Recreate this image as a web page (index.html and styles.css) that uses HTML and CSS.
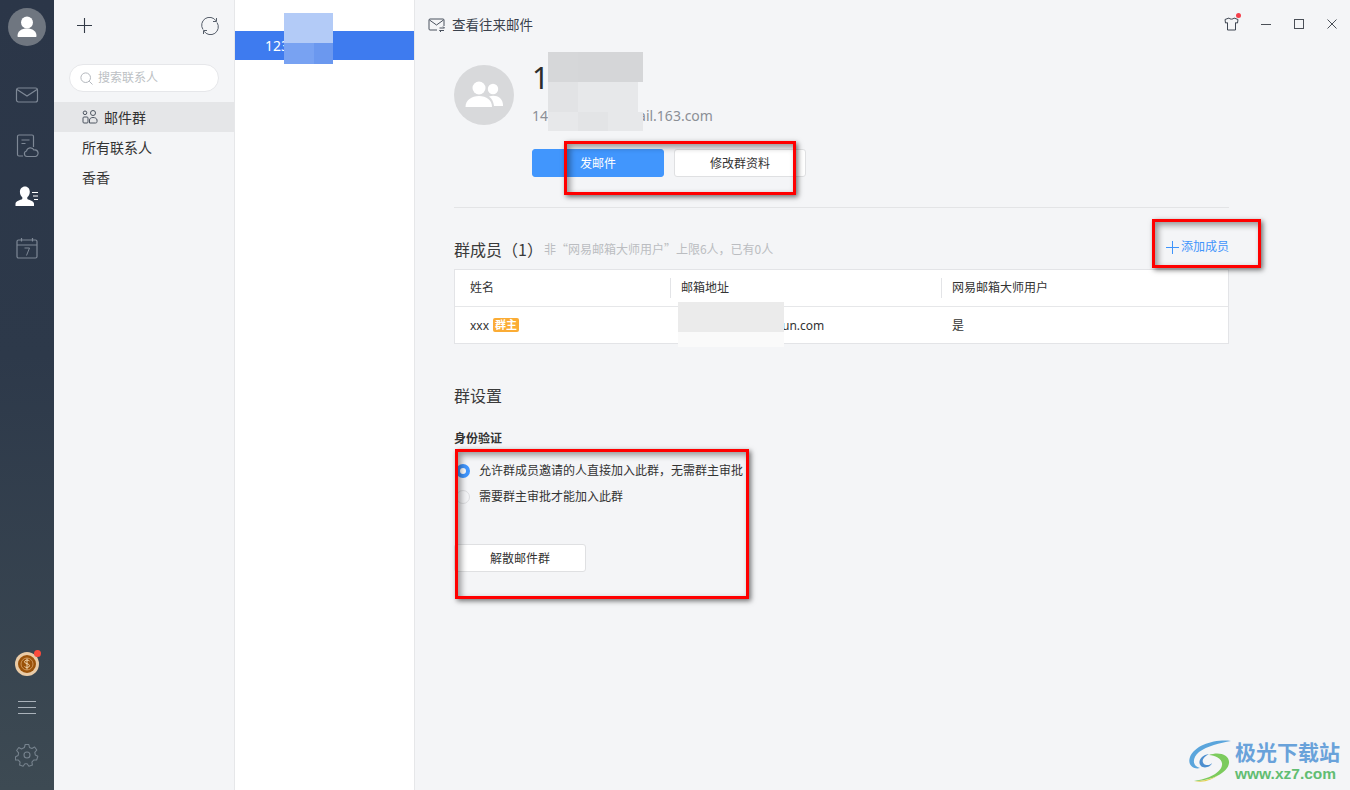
FILE: index.html
```html
<!DOCTYPE html>
<html lang="zh-CN">
<head>
<meta charset="utf-8">
<title>网易邮箱大师</title>
<link rel="stylesheet" href="styles.css">
</head>
<body>
<div class="app">
  <nav class="rail">
    <div class="avatar">
      <svg width="38" height="38" viewBox="0 0 38 38"><circle cx="19" cy="14.500" r="6" fill="#fff"/><path d="M9.500 28c0-5 4-7.500 9.500-7.500s9.500 2.500 9.500 7.500c0 .6-.4 1-1 1h-17c-.6 0-1-.4-1-1z" fill="#fff"/></svg>
    </div>
    <div class="rail-icons">
      <svg class="rail-icon" width="24" height="24" viewBox="0 0 24 24" fill="none" stroke="#7e8896" stroke-width="1.200"><rect x="1.500" y="5" width="21" height="14" rx="2"/><path d="M2 6.500l10 6.500 10-6.500"/></svg>
      <svg class="rail-icon" width="24" height="24" viewBox="0 0 24 24" fill="none" stroke="#7e8896" stroke-width="1.200"><path d="M8 22H4a1.500 1.500 0 0 1-1.500-1.500v-18A1.500 1.500 0 0 1 4 1h13a1.500 1.500 0 0 1 1.500 1.500V13"/><path d="M6.500 6h8M6.500 9.500h4"/><path d="M12 22.500a2.800 2.800 0 0 1-.5-5.500 4 4 0 0 1 7.500-1 3.300 3.300 0 0 1 1.500 6.500z"/></svg>
      <svg class="rail-icon" width="24" height="24" viewBox="0 0 24 24"><path d="M10 1.500c3 0 4.800 2.300 4.800 5.300 0 2.300-1.100 4.300-2.500 5.400v1.800c1.800 1.200 6.700 1.700 6.700 4.800v2.200H.500v-2.200c0-3.100 5-3.600 6.800-4.800v-1.800C5.900 11.100 4.900 9.100 4.900 6.800c0-3 2.100-5.300 5.100-5.300z" fill="#fff"/><path d="M17 7.500h6M18 11h5M19 14.500h4" stroke="#fff" stroke-width="1.200"/></svg>
      <svg class="rail-icon rail-icon-last" width="24" height="24" viewBox="0 0 24 24" fill="none" stroke="#7e8896" stroke-width="1.200"><rect x="2" y="3" width="20" height="18" rx="1.500"/><path d="M2 8h20M6.500 1v3.500M17.500 1v3.500"/><path d="M9.500 11h5l-3 7.500" stroke-width="1"/></svg>
    </div>
    <div class="rail-foot">
      <div class="coin">
        <svg width="24" height="24" viewBox="0 0 24 24"><circle cx="12" cy="12" r="12" fill="#eacba6"/><circle cx="12" cy="12" r="9" fill="#9b5209"/><circle cx="12" cy="12" r="6" fill="none" stroke="#d9a56b" stroke-width=".8"/><path d="M14.500 9c-1-1.300-5-1.300-5 .8 0 2.400 5 1.400 5 3.900 0 2.200-4 2.200-5 .8M12 6.500v11" fill="none" stroke="#f1d5ae" stroke-width="1"/></svg>
        <span class="coin-dot"></span>
      </div>
      <svg class="menu" width="18" height="14" viewBox="0 0 18 14" stroke="#aab2ba" stroke-width="1"><path d="M0 .5h18M0 6.500h18M0 12.500h18"/></svg>
      <svg class="gear" width="24" height="24" viewBox="0 0 24 24" fill="none" stroke="#77838e" stroke-width="1.100"><circle cx="12" cy="12" r="3"/><path d="M10.200 1.500h3.600l.7 3 2.400 1 2.700-1.500 2.200 3-2 2.300.5 2.700 2.500 1.300-1.100 3.600-3 .1-1.800 2.100.5 3-3.500 1.100-1.800-2.500h-2.200l-1.800 2.500-3.500-1.100.5-3-1.800-2.100-3-.1L.6 13.800l2.500-1.300.5-2.700-2-2.300 2.200-3L6.500 6l2.900-1.500z" stroke-linejoin="round"/></svg>
    </div>
  </nav>

  <aside class="contacts">
    <div class="contacts-top">
      <svg width="15" height="15" viewBox="0 0 15 15" stroke="#333b47" stroke-width="1.100"><path d="M7.500 0v15M0 7.500h15"/></svg>
      <svg width="18" height="18" viewBox="0 0 18 18" fill="none" stroke="#555d69" stroke-width="1"><path d="M2 12.500A7.500 7.500 0 0 1 15 3.800"/><path d="M16 5.500A7.500 7.500 0 0 1 3 14.200"/><path d="M15.500 1v3.500H12M2.500 17v-3.500H6"/></svg>
    </div>
    <div class="search">
      <svg width="13" height="13" viewBox="0 0 13 13" fill="none" stroke="#b4b8be" stroke-width="1"><circle cx="5.700" cy="5.700" r="4.800"/><path d="M9.200 9.200l3.300 3.300"/></svg>
      <span>搜索联系人</span>
    </div>
    <ul class="groups">
      <li class="group group-active">
        <svg class="group-icon" width="16" height="14" viewBox="0 0 16 14" fill="none" stroke="#4d5561" stroke-width="1"><circle cx="3" cy="2.800" r="1.800"/><circle cx="11" cy="3" r="2.500"/><rect x="1" y="7" width="5" height="6" rx="1"/><path d="M7.500 13v-3c0-1.500 1.500-2.500 3.500-2.500s4 1 4 2.500v1.500c0 1-.5 1.500-1.500 1.500z"/></svg>
        <span>邮件群</span>
      </li>
      <li class="group">所有联系人</li>
      <li class="group">香香</li>
    </ul>
  </aside>

  <section class="list">
    <div class="list-row">123</div>
  </section>

  <main class="detail">
    <header class="topbar">
      <div class="history">
        <svg width="17" height="15" viewBox="0 0 17 15" fill="none" stroke="#4a525e" stroke-width="1"><path d="M9 12H2a1 1 0 0 1-1-1V2a1 1 0 0 1 1-1h13a1 1 0 0 1 1 1v6"/><path d="M1.500 2l7 5 7-5"/><path d="M11.500 10h5l-1.500-1.500M16 12.500h-4.500l1.500 1.500"/></svg>
        <span>查看往来邮件</span>
      </div>
      <div class="winctl">
        <span class="skin">
          <svg width="15" height="14" viewBox="0 0 15 14" fill="none" stroke="#3e4652" stroke-width="1"><path d="M5 1L1 2.500l.5 3.500 2-.3V13h8V5.700l2 .3.500-3.500L10 1c-.5 1.500-4.500 1.500-5 0z"/></svg>
          <span class="skin-dot"></span>
        </span>
        <svg width="10" height="10" viewBox="0 0 10 10" stroke="#4a4f57" stroke-width="1"><path d="M0 5.500h10"/></svg>
        <svg width="10" height="10" viewBox="0 0 10 10" fill="none" stroke="#4a4f57" stroke-width="1"><rect x=".5" y=".5" width="9" height="9"/></svg>
        <svg width="10" height="10" viewBox="0 0 10 10" stroke="#4a4f57" stroke-width="1"><path d="M.5.500l9 9M9.500.500l-9 9"/></svg>
      </div>
    </header>

    <div class="content">
      <div class="profile">
        <div class="group-avatar">
          <svg width="40" height="30" viewBox="0 0 40 30" fill="#fff"><circle cx="15" cy="8" r="6.500"/><circle cx="29" cy="9" r="5.200"/><path d="M1.500 27c0-7 6-11 13.500-11s13 4 13 11z"/><path d="M25 16.500c6-2.500 14 .5 14 8.500v1h-9c-.5-4-2-7.500-5-9.500z"/></svg>
        </div>
        <div class="profile-info">
          <h1 class="name">1</h1>
          <p class="mail">14<span class="mail-gap"></span>ail.163.com</p>
        </div>
      </div>
      <div class="actions">
        <button class="btn btn-primary">发邮件</button>
        <button class="btn">修改群资料</button>
      </div>
      <hr class="rule">

      <div class="members-head">
        <div class="members-title">
          <h2 class="section">群成员（1）</h2>
          <span class="hint">非“网易邮箱大师用户”上限6人，已有0人</span>
        </div>
        <a class="add">
          <svg width="13" height="13" viewBox="0 0 13 13" stroke="#3f94fb" stroke-width="1"><path d="M6.500 0v13M0 6.500h13"/></svg>
          <span>添加成员</span>
        </a>
      </div>
      <div class="table">
        <div class="tr th">
          <div class="td">姓名</div>
          <div class="td td-split">邮箱地址</div>
          <div class="td td-split">网易邮箱大师用户</div>
        </div>
        <div class="tr">
          <div class="td">xxx<span class="owner">群主</span></div>
          <div class="td td-mail">un.com</div>
          <div class="td td-yes">是</div>
        </div>
      </div>

      <h2 class="section settings-title">群设置</h2>
      <h3 class="auth">身份验证</h3>
      <label class="radio"><span class="dot dot-on"></span>允许群成员邀请的人直接加入此群，无需群主审批</label>
      <label class="radio"><span class="dot"></span>需要群主审批才能加入此群</label>
      <button class="btn btn-danger">解散邮件群</button>
    </div>
  </main>
</div>

<!-- privacy masks over the personal data -->
<div class="mask mask-a"></div>
<div class="mask mask-b"></div>
<div class="mask mask-c"></div>
<div class="mask mask-d"></div>
<div class="mask mask-e"></div>
<div class="mask mask-f"></div>
<div class="mask mask-l"></div>
<div class="mask mask-g"></div>
<div class="mask mask-h"></div>
<div class="mask mask-i"></div>
<div class="mask mask-j"></div>
<div class="mask mask-k"></div>

<!-- call-out frames -->
<div class="frame frame-1"></div>
<div class="frame frame-2"></div>
<div class="frame frame-3"></div>

<div class="brand">
  <svg width="52" height="44" viewBox="0 0 52 44" fill="none">
    <path d="M44 2C28 0 8 6 3 18c-3 8 4 13 10 11C5 27 5 19 12 13 20 7 33 4 44 2z" fill="#5aa5dc"/>
    <path d="M14 27c-4-4 0-11 8-12-6 3-8 7-5 10 2 2 7 1 8-1-1 4-8 6-11 3z" fill="#4d8fd0"/>
    <path d="M22 16c10-4 21 0 20 8-1 10-18 18-35 18 14-2 27-8 28-16 1-6-7-10-13-10z" fill="#7ccb5d"/>
    <path d="M7 42c10 0 18-2 24-6-6 5-14 8-24 6z" fill="#e3d04c"/>
  </svg>
  <div class="brand-text">
    <div class="brand-name">极光下载站</div>
    <div class="brand-url">www.xz7.com</div>
  </div>
</div>
</body>
</html>
```

FILE: styles.css
```css
* { box-sizing: border-box; }

html, body {
  margin: 0;
  height: 790px;
  overflow: hidden;
}

body {
  font-family: "Noto Sans", "Noto Sans CJK SC", sans-serif;
  color: #333;
  background: #f4f5f7;
  position: relative;
}

.app {
  display: grid;
  grid-template-columns: 54px 181px 180px 1fr;
  height: 790px;
}

/* left navigation rail */
.rail {
  background: linear-gradient(#2b3648 0, #2d394a 45%, #3d4a53 100%);
  display: flex;
  flex-direction: column;
  align-items: center;
  padding-top: 8px;
}

.avatar {
  width: 38px;
  height: 38px;
  border-radius: 50%;
  background: #6f7680;
}

.rail-icons {
  display: flex;
  flex-direction: column;
  gap: 27px;
  margin-top: 37px;
}

.rail-icon { display: block; }

.rail-icon-last { margin-top: 1px; }

.rail-foot {
  margin-top: auto;
  display: flex;
  flex-direction: column;
  align-items: center;
  padding-bottom: 23px;
}

.coin {
  position: relative;
  width: 24px;
  height: 24px;
}

.coin svg { display: block; }

.coin-dot {
  position: absolute;
  top: -2px;
  right: -2px;
  width: 7px;
  height: 7px;
  border-radius: 50%;
  background: #fa4a3c;
}

.menu { margin-top: 25px; }

.gear { margin-top: 28px; }

/* contact groups column */
.contacts {
  background: #f4f5f7;
  border-right: 1px solid #e6e7e9;
}

.contacts-top {
  display: flex;
  justify-content: space-between;
  align-items: center;
  padding: 17px 15px 0 23px;
  height: 34px;
}

.search {
  margin: 30px 15px 0;
  height: 28px;
  border: 1px solid #e6e7ea;
  border-radius: 14px;
  background: #fff;
  display: flex;
  align-items: center;
  gap: 5px;
  padding-left: 10px;
  font-size: 12px;
  line-height: 16px;
  color: #bcbfc4;
}

.groups {
  list-style: none;
  margin: 10px 0 0;
  padding: 0;
}

.group {
  height: 30px;
  display: flex;
  align-items: center;
  gap: 6px;
  padding: 2px 0 0 28px;
  font-size: 14px;
  line-height: 18px;
  color: #333;
}

.group-icon { margin-top: -2px; }

.group-active { background: #e5e6e8; }

/* conversation list column */
.list {
  background: #fff;
  border-right: 1px solid #e6e7e9;
  padding-top: 31px;
}

.list-row {
  height: 29px;
  background: #3e7bef;
  color: #fff;
  font-size: 14px;
  line-height: 29px;
  padding-left: 30px;
}

/* detail pane */
.detail {
  min-width: 0;
  background: #f4f5f7;
}

.topbar {
  height: 50px;
  display: flex;
  justify-content: space-between;
  padding: 17px 13px 0 13px;
}

.history {
  display: flex;
  align-items: center;
  gap: 7px;
  height: 16px;
  font-size: 13.500px;
  line-height: 16px;
  color: #3a414c;
}

.winctl {
  display: flex;
  align-items: center;
  gap: 23px;
  height: 14px;
}

.skin { position: relative; display: flex; margin-right: -1px; }

.skin-dot {
  position: absolute;
  top: -4px;
  right: -2px;
  width: 5px;
  height: 5px;
  border-radius: 50%;
  background: #f5414d;
}

.content {
  padding: 0 121px 0 39px;
}

.profile {
  display: flex;
  gap: 18px;
  height: 99px;
}

.group-avatar {
  width: 60px;
  height: 60px;
  margin-top: 15px;
  border-radius: 50%;
  background: #d8d9db;
  display: flex;
  align-items: center;
  justify-content: center;
}

.name {
  margin: 9px 0 0;
  font-size: 30px;
  line-height: 38px;
  font-weight: 400;
  color: #2c2c2c;
}

.mail {
  margin: 10px 0 0;
  font-size: 14px;
  line-height: 18px;
  color: #8b8f96;
}

.mail-gap {
  display: inline-block;
  width: 90px;
}

.actions {
  display: flex;
  gap: 10px;
  padding-left: 78px;
}

.btn {
  width: 132px;
  height: 28px;
  padding: 0;
  border: 1px solid #dfe0e2;
  border-radius: 3px;
  background: #fff;
  font: 12px/16px "Noto Sans CJK SC", sans-serif;
  color: #333;
}

.btn-primary {
  background: #4196fd;
  border-color: #4196fd;
  color: #fff;
}

.rule {
  margin: 30px 0 0;
  border: 0;
  border-top: 1px solid #e3e4e6;
}

.members-head {
  display: flex;
  justify-content: space-between;
  align-items: flex-end;
  height: 61px;
  padding-bottom: 10px;
}

.members-title {
  display: flex;
  align-items: center;
}

.section {
  margin: 0;
  font-family: "Noto Sans CJK SC", sans-serif;
  font-size: 16px;
  line-height: 20px;
  font-weight: 400;
  color: #3a3a3a;
}

.hint {
  font-family: "Noto Sans CJK SC", sans-serif;
  font-size: 12px;
  line-height: 18px;
  color: #bbbdc1;
  margin-left: 1px;
}

.add {
  display: flex;
  align-items: center;
  gap: 2px;
  font-size: 12px;
  line-height: 16px;
  color: #3f94fb;
  margin-bottom: 4px;
}

.table {
  background: #fff;
  border: 1px solid #e3e4e7;
  height: 75px;
}

.tr {
  display: grid;
  grid-template-columns: 215px 271px 1fr;
  height: 37px;
  align-items: center;
  font-size: 12px;
  line-height: 18px;
  color: #333;
}

.th { border-bottom: 1px solid #e6e7e9; height: 37px; }

.td { padding-left: 15px; }

.td-split {
  border-left: 1px solid #e3e4e7;
  padding-left: 10px;
  line-height: 20px;
}

.td-mail {
  padding-left: 112px;
  font-size: 12px;
}

.td-yes { padding-left: 11px; }

.owner {
  display: inline-block;
  margin-left: 4px;
  padding: 0 2px;
  height: 14px;
  border-radius: 2px;
  background: #fbac35;
  color: #fff;
  font-size: 11px;
  line-height: 14px;
  font-weight: 700;
  vertical-align: 1px;
}

.settings-title { margin-top: 41px; }

.auth {
  margin: 26px 0 0;
  font-size: 12px;
  line-height: 16px;
  font-weight: 700;
  color: #333;
}

.radio {
  display: flex;
  align-items: center;
  gap: 9px;
  height: 26px;
  font-size: 12px;
  line-height: 18px;
  color: #333;
  padding-left: 2px;
}

.radio:first-of-type { margin-top: 11px; }

.dot {
  width: 14px;
  height: 14px;
  border-radius: 50%;
  border: 1px solid #dcdde0;
  background: #f4f5f7;
}

.dot-on {
  border: 4px solid #4196fd;
  background: #fff;
}

.btn-danger {
  display: block;
  margin-top: 34px;
}

/* privacy masks */
.mask { position: absolute; }

.mask-a { left: 548px; top: 52px; width: 30px; height: 30px; background: #d6d7d9; }
.mask-b { left: 578px; top: 52px; width: 65px; height: 30px; background: #d5d6d8; }
.mask-c { left: 548px; top: 82px; width: 30px; height: 30px; background: #e2e3e5; }
.mask-d { left: 578px; top: 82px; width: 60px; height: 30px; background: #e7e8ea; }
.mask-e { left: 548px; top: 112px; width: 30px; height: 19px; background: #e7e8ea; }
.mask-f { left: 578px; top: 112px; width: 30px; height: 19px; background: #e3e4e6; }
.mask-l { left: 608px; top: 112px; width: 35px; height: 19px; background: #e7e8ea; }
.mask-g { left: 284px; top: 13px; width: 49px; height: 30px; background: #b3cbf7; }
.mask-h { left: 284px; top: 43px; width: 30px; height: 21px; background: #78a2f2; }
.mask-i { left: 314px; top: 43px; width: 19px; height: 21px; background: #6b98ef; }
.mask-j { left: 678px; top: 302px; width: 106px; height: 30px; background: #ebebeb; }
.mask-k { left: 678px; top: 332px; width: 106px; height: 15px; background: #fafafa; }

/* red call-out frames */
.frame {
  position: absolute;
  border: 3px solid #f00;
  box-shadow: 2px 2px 5px rgba(0, 0, 0, .55), inset 3px 3px 6px rgba(0, 0, 0, .4);
}

.frame-1 { left: 564px; top: 141px; width: 232px; height: 54px; }
.frame-2 { left: 1152px; top: 219px; width: 109px; height: 49px; }
.frame-3 { left: 455px; top: 449px; width: 294px; height: 150px; }

/* site badge in the corner */
.brand {
  position: absolute;
  left: 1187px;
  top: 739px;
  display: flex;
  gap: 1px;
}

.brand-text { margin-left: -5px; }

.brand-name {
  font-size: 21px;
  line-height: 24px;
  font-weight: 700;
  color: #69a2da;
  font-family: "Noto Sans CJK SC", sans-serif;
}

.brand-url {
  font-size: 15.500px;
  line-height: 20px;
  margin-top: 1px;
  font-weight: 700;
  color: #62bd72;
  font-family: "Liberation Sans", sans-serif;
}
```
